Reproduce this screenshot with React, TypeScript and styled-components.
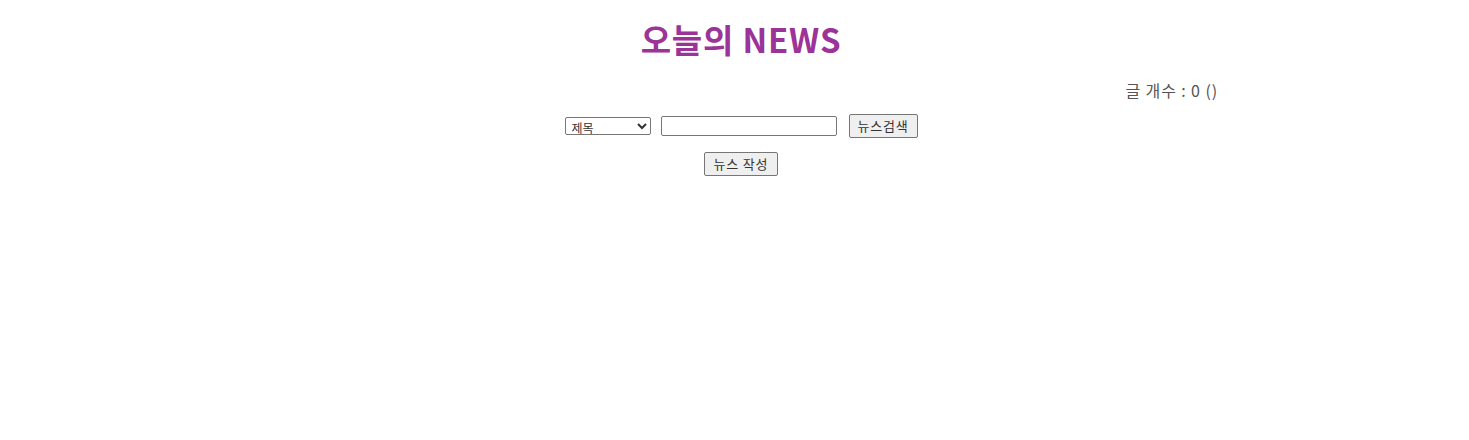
import React from "react";
import styled, { createGlobalStyle } from "styled-components";

const Global = createGlobalStyle`
  html, body { margin: 0; padding: 0; background: #ffffff; }
  body { font-family: "Noto Sans CJK KR", "Noto Sans", sans-serif; }
`;

const Page = styled.div`
  width: 954px;
  margin-left: 264px;
  display: flex;
  flex-direction: column;
  align-items: center;
`;

const Title = styled.h1`
  margin: 16px 0 0;
  height: 46px;
  line-height: 46px;
  font-size: 33px;
  font-weight: 700;
  color: #9b3399;
  font-family: "Noto Sans CJK KR", "Noto Sans", sans-serif;
  letter-spacing: 0.8px;
`;

const Count = styled.p`
  align-self: stretch;
  margin: 14px 0 0;
  height: 28px;
  line-height: 28px;
  text-align: right;
  font-size: 16px;
  font-weight: 400;
  letter-spacing: 0.9px;
  color: #555555;
`;

const SearchRow = styled.form`
  display: flex;
  align-items: center;
  gap: 10px;
  margin-top: 10px;
  height: 24px;
`;

const Select = styled.select`
  width: 86px;
  height: 18px;
  font-size: 12px;
  padding: 0 0 0 2px;
  border: 1px solid #767676;
  border-radius: 2px;
  background: #fff;
  color: #333;
  font-family: "Noto Sans CJK KR", sans-serif;
`;

const Input = styled.input`
  width: 176px;
  height: 20px;
  box-sizing: border-box;
  border: 1px solid #767676;
  border-radius: 2px;
  margin-right: 2px;
`;

const Button = styled.button<{ $w: number }>`
  width: ${(p) => p.$w}px;
  height: 24px;
  box-sizing: border-box;
  padding: 0;
  font-size: 13px;
  letter-spacing: 0.8px;
  line-height: 20px;
  color: #333;
  background: #efefef;
  border: 1px solid #767676;
  border-radius: 2px;
  font-family: "Noto Sans CJK KR", sans-serif;
`;

const WriteRow = styled.div`
  margin-top: 14px;
  display: flex;
`;

export default function App() {
  return (
    <>
      <Global />
      <Page>
        <Title>오늘의 NEWS</Title>
        <Count>글 개수 : 0 ()</Count>
        <SearchRow onSubmit={(e) => e.preventDefault()}>
          <Select defaultValue="title">
            <option value="title">제목</option>
            <option value="content">내용</option>
          </Select>
          <Input type="text" />
          <Button $w={69} type="button">뉴스검색</Button>
        </SearchRow>
        <WriteRow>
          <Button $w={74} type="button">뉴스 작성</Button>
        </WriteRow>
      </Page>
    </>
  );
}
